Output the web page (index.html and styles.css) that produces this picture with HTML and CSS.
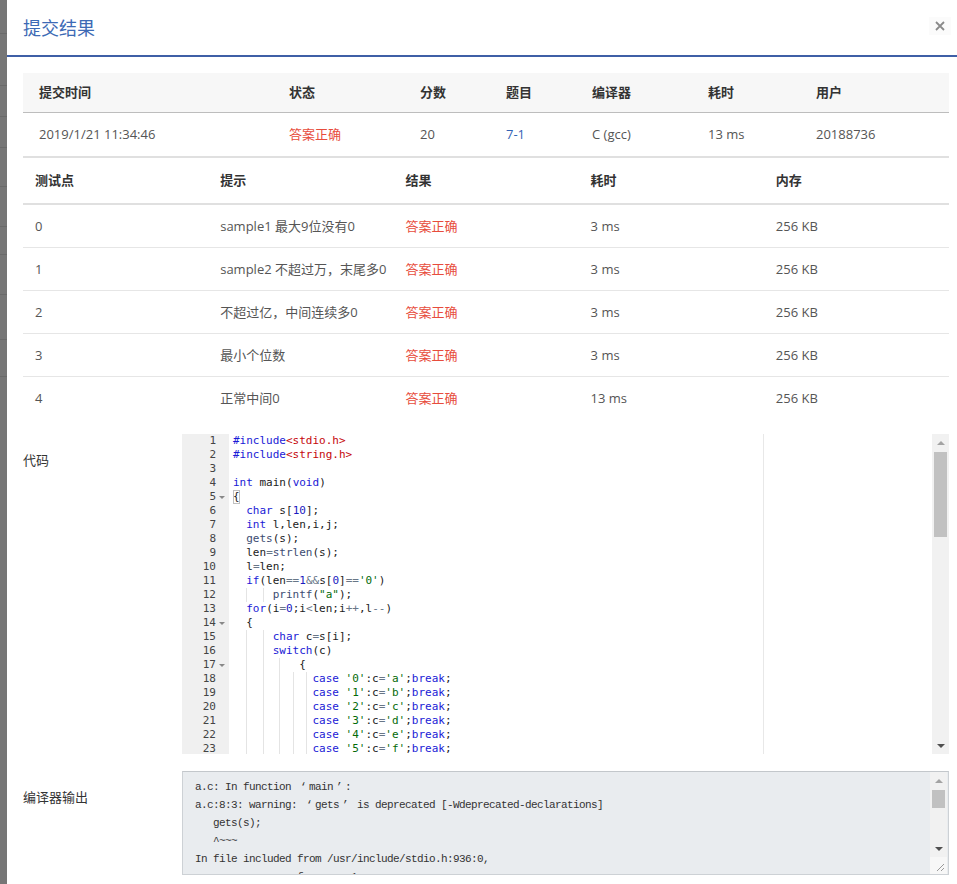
FILE: index.html
```html
<!DOCTYPE html>
<html lang="zh-CN">
<head>
<meta charset="utf-8">
<title>提交结果</title>
<link rel="stylesheet" href="styles.css">
</head>
<body>
<div class="modal">
  <div class="modal-header">
    <h4 class="modal-title">提交结果</h4>
    <button class="close" type="button" aria-label="Close">
      <svg width="10" height="10" viewBox="0 0 10 10"><path d="M1 1L9 9M9 1L1 9" stroke="#8a8a8a" stroke-width="1.8" fill="none"/></svg>
    </button>
  </div>
  <div class="modal-body">
    <div class="sum">
      <div class="sum-head">
        <div>提交时间</div><div>状态</div><div>分数</div><div>题目</div><div>编译器</div><div>耗时</div><div>用户</div>
      </div>
      <div class="sum-row">
        <div>2019/1/21 11:34:46</div><div class="ok">答案正确</div><div>20</div><div class="link">7-1</div><div>C (gcc)</div><div>13 ms</div><div>20188736</div>
      </div>
    </div>

    <div class="tests">
      <div class="t-head">
        <div>测试点</div><div>提示</div><div>结果</div><div>耗时</div><div>内存</div>
      </div>
      <div class="t-row"><div>0</div><div>sample1 最大9位没有0</div><div class="ok">答案正确</div><div>3 ms</div><div>256 KB</div></div>
      <div class="t-row"><div>1</div><div>sample2 不超过万，末尾多0</div><div class="ok">答案正确</div><div>3 ms</div><div>256 KB</div></div>
      <div class="t-row"><div>2</div><div>不超过亿，中间连续多0</div><div class="ok">答案正确</div><div>3 ms</div><div>256 KB</div></div>
      <div class="t-row"><div>3</div><div>最小个位数</div><div class="ok">答案正确</div><div>3 ms</div><div>256 KB</div></div>
      <div class="t-row"><div>4</div><div>正常中间0</div><div class="ok">答案正确</div><div>13 ms</div><div>256 KB</div></div>
    </div>

    <div class="field code-field">
      <div class="label">代码</div>
      <div class="editor">
        <div class="gutter">
          <div class="gl"><span class="num">1</span><span class="fc"></span></div>
          <div class="gl"><span class="num">2</span><span class="fc"></span></div>
          <div class="gl"><span class="num">3</span><span class="fc"></span></div>
          <div class="gl"><span class="num">4</span><span class="fc"></span></div>
          <div class="gl"><span class="num">5</span><span class="fc"><span class="fw"></span></span></div>
          <div class="gl"><span class="num">6</span><span class="fc"></span></div>
          <div class="gl"><span class="num">7</span><span class="fc"></span></div>
          <div class="gl"><span class="num">8</span><span class="fc"></span></div>
          <div class="gl"><span class="num">9</span><span class="fc"></span></div>
          <div class="gl"><span class="num">10</span><span class="fc"></span></div>
          <div class="gl"><span class="num">11</span><span class="fc"></span></div>
          <div class="gl"><span class="num">12</span><span class="fc"></span></div>
          <div class="gl"><span class="num">13</span><span class="fc"></span></div>
          <div class="gl"><span class="num">14</span><span class="fc"><span class="fw"></span></span></div>
          <div class="gl"><span class="num">15</span><span class="fc"></span></div>
          <div class="gl"><span class="num">16</span><span class="fc"></span></div>
          <div class="gl"><span class="num">17</span><span class="fc"><span class="fw"></span></span></div>
          <div class="gl"><span class="num">18</span><span class="fc"></span></div>
          <div class="gl"><span class="num">19</span><span class="fc"></span></div>
          <div class="gl"><span class="num">20</span><span class="fc"></span></div>
          <div class="gl"><span class="num">21</span><span class="fc"></span></div>
          <div class="gl"><span class="num">22</span><span class="fc"></span></div>
          <div class="gl"><span class="num">23</span><span class="fc"></span></div>
          <div class="gl"><span class="num">24</span><span class="fc"></span></div>
        </div>
        <div class="code">
          <div class="print-margin"></div>
          <div class="ln"><span class="k">#include</span><span class="c">&lt;stdio.h&gt;</span></div>
          <div class="ln"><span class="k">#include</span><span class="c">&lt;string.h&gt;</span></div>
          <div class="ln"> </div>
          <div class="ln"><span class="k">int</span> main(<span class="k">void</span>)</div>
          <div class="ln"><span class="br">{</span></div>
          <div class="ln">  <span class="k">char</span> s[<span class="n">10</span>];</div>
          <div class="ln">  <span class="k">int</span> l,len,i,j;</div>
          <div class="ln">  <span class="f">gets</span>(s);</div>
          <div class="ln">  len<span class="o">=</span><span class="f">strlen</span>(s);</div>
          <div class="ln">  l<span class="o">=</span>len;</div>
          <div class="ln">  <span class="k">if</span>(len<span class="o">==</span><span class="n">1</span><span class="o">&amp;&amp;</span>s[<span class="n">0</span>]<span class="o">==</span><span class="s">'0'</span>)</div>
          <div class="ln">  <span class="g w25"></span><span class="g w15"></span><span class="f">printf</span>(<span class="s">"a"</span>);</div>
          <div class="ln">  <span class="k">for</span>(i<span class="o">=</span><span class="n">0</span>;i<span class="o">&lt;</span>len;i<span class="o">++</span>,l<span class="o">--</span>)</div>
          <div class="ln">  {</div>
          <div class="ln">  <span class="g w25"></span><span class="g w15"></span><span class="k">char</span> c<span class="o">=</span>s[i];</div>
          <div class="ln">  <span class="g w25"></span><span class="g w15"></span><span class="k">switch</span>(c)</div>
          <div class="ln">  <span class="g w25"></span><span class="g w25"></span><span class="g w3"></span>{</div>
          <div class="ln">  <span class="g w25"></span><span class="g w25"></span><span class="g w2"></span><span class="g w2"></span><span class="g w1"></span><span class="k">case</span> <span class="s">'0'</span>:c<span class="o">=</span><span class="s">'a'</span>;<span class="k">break</span>;</div>
          <div class="ln">  <span class="g w25"></span><span class="g w25"></span><span class="g w2"></span><span class="g w2"></span><span class="g w1"></span><span class="k">case</span> <span class="s">'1'</span>:c<span class="o">=</span><span class="s">'b'</span>;<span class="k">break</span>;</div>
          <div class="ln">  <span class="g w25"></span><span class="g w25"></span><span class="g w2"></span><span class="g w2"></span><span class="g w1"></span><span class="k">case</span> <span class="s">'2'</span>:c<span class="o">=</span><span class="s">'c'</span>;<span class="k">break</span>;</div>
          <div class="ln">  <span class="g w25"></span><span class="g w25"></span><span class="g w2"></span><span class="g w2"></span><span class="g w1"></span><span class="k">case</span> <span class="s">'3'</span>:c<span class="o">=</span><span class="s">'d'</span>;<span class="k">break</span>;</div>
          <div class="ln">  <span class="g w25"></span><span class="g w25"></span><span class="g w2"></span><span class="g w2"></span><span class="g w1"></span><span class="k">case</span> <span class="s">'4'</span>:c<span class="o">=</span><span class="s">'e'</span>;<span class="k">break</span>;</div>
          <div class="ln">  <span class="g w25"></span><span class="g w25"></span><span class="g w2"></span><span class="g w2"></span><span class="g w1"></span><span class="k">case</span> <span class="s">'5'</span>:c<span class="o">=</span><span class="s">'f'</span>;<span class="k">break</span>;</div>
          <div class="ln">  <span class="g w25"></span><span class="g w25"></span><span class="g w2"></span><span class="g w2"></span><span class="g w1"></span><span class="k">case</span> <span class="s">'6'</span>:c<span class="o">=</span><span class="s">'g'</span>;<span class="k">break</span>;</div>
        </div>
        <div class="vscroll">
          <div class="sb-btn"><span class="arr up dim"></span></div>
          <div class="sb-track">
            <div class="sb-thumb editor-thumb"></div>
          </div>
          <div class="sb-btn"><span class="arr down"></span></div>
        </div>
      </div>
    </div>

    <div class="field out-field">
      <div class="label">编译器输出</div>
      <div class="output">
        <div class="out-text">
          <div class="ol">a.c: In function <span class="q">‘</span>main<span class="q">’</span>:</div>
          <div class="ol">a.c:8:3: warning: <span class="q">‘</span>gets<span class="q">’</span> is deprecated [-Wdeprecated-declarations]</div>
          <div class="ol">   gets(s);</div>
          <div class="ol">   ^~~~</div>
          <div class="ol">In file included from /usr/include/stdio.h:936:0,</div>
          <div class="ol">                 from a.c:1:</div>
        </div>
        <div class="vscroll out-scroll">
          <div class="sb-btn"><span class="arr up dim"></span></div>
          <div class="sb-track">
            <div class="sb-thumb out-thumb"></div>
          </div>
          <div class="sb-btn"><span class="arr down"></span></div>
          <div class="resizer">
            <svg width="17" height="17" viewBox="0 0 17 17"><path d="M14 7L7 14M14 11L11 14" stroke="#9a9a9a" stroke-width="1" fill="none"/></svg>
          </div>
        </div>
      </div>
    </div>
  </div>
</div>
</body>
</html>
```

FILE: styles.css
```css
* { box-sizing: border-box; }

html, body {
  margin: 0;
  height: 100%;
  overflow: hidden;
}

body {
  background-color: #767676;
  background-image: linear-gradient(to bottom,
    transparent 33px, #6a6a6a 33px, #6a6a6a 34px, transparent 34px,
    transparent 85px, #6a6a6a 85px, #6a6a6a 86px, transparent 86px,
    transparent 116px, #6a6a6a 116px, #6a6a6a 117px, transparent 117px,
    transparent 147px, #6a6a6a 147px, #6a6a6a 148px, transparent 148px,
    transparent 186px, #6a6a6a 186px, #6a6a6a 187px, transparent 187px,
    transparent 226px, #6a6a6a 226px, #6a6a6a 227px, transparent 227px,
    transparent 254px, #6a6a6a 254px, #6a6a6a 255px, transparent 255px,
    transparent 294px, #6a6a6a 294px, #6a6a6a 295px, transparent 295px,
    transparent 339px, #6a6a6a 339px, #6a6a6a 340px, transparent 340px,
    transparent 376px, #6a6a6a 376px, #6a6a6a 377px, transparent 377px);
  font-family: "Open Sans", "Noto Sans CJK SC", sans-serif;
  font-size: 13px;
  color: #555;
}

.modal {
  margin-left: 7px;
  height: 100%;
  background: #fff;
}

.modal-header {
  display: flex;
  align-items: center;
  justify-content: space-between;
  height: 57px;
  padding: 0 6px 0 16px;
  border-bottom: 2px solid #3f5fa6;
}

.modal-title {
  margin: 0;
  font-size: 18px;
  font-weight: normal;
  line-height: 26px;
  color: #3d6ab5;
}

.close {
  display: flex;
  align-items: center;
  justify-content: center;
  width: 22px;
  height: 18px;
  margin-top: -4px;
  padding: 0;
  border: 0;
  background: #fbfbfb;
}

.modal-body {
  padding: 16px 8px 0 16px;
}

/* summary table */
.sum { width: 926px; }

.sum-head, .sum-row {
  display: grid;
  grid-template-columns: 250px 131px 86px 86px 116px 108px 149px;
}

.sum-head {
  background: #f7f7f7;
  border-bottom: 1px solid #bdbdbd;
}

.sum-head > div {
  padding: 10px 16px;
  line-height: 19px;
  font-weight: bold;
  color: #333;
  white-space: nowrap;
}

.sum-row {
  border-bottom: 2px solid #e0e0e0;
}

.sum-row > div {
  padding: 12px 16px;
  line-height: 19px;
  white-space: nowrap;
}

.ok { color: #e74c3c; }
.link { color: #3363b5; }

/* tests table */
.tests { width: 926px; }

.t-head, .t-row {
  display: grid;
  grid-template-columns: repeat(5, minmax(0, 1fr));
}

.t-head {
  border-bottom: 2px solid #e0e0e0;
}

.t-head > div {
  padding: 13px 12px;
  line-height: 19px;
  font-weight: bold;
  color: #333;
}

.t-row > div {
  padding: 12px 12px 11px;
  line-height: 19px;
  white-space: nowrap;
}

.t-row + .t-row {
  border-top: 1px solid #e6e6e6;
}

/* fields */
.field {
  display: flex;
  width: 926px;
}

.code-field { margin-top: 15px; }
.out-field { margin-top: 17px; }

.label {
  width: 159px;
  flex: none;
  padding-top: 17px;
  line-height: 19px;
  color: #333;
}

/* editor */
.editor {
  display: flex;
  width: 767px;
  height: 320px;
  overflow: hidden;
  background: #fff;
  font-family: "DejaVu Sans Mono", "Liberation Mono", monospace;
  font-size: 11px;
  line-height: 14px;
  color: #222;
}

.gutter {
  width: 47px;
  flex: none;
  background: #f0f0f0;
  color: #444;
}

.gl {
  display: flex;
  height: 14px;
}

.num {
  flex: 1;
  text-align: right;
}

.fc {
  width: 13px;
  display: flex;
  align-items: center;
  justify-content: center;
}

.fw {
  width: 0;
  height: 0;
  border-left: 3px solid transparent;
  border-right: 3px solid transparent;
  border-top: 3px solid #888;
  margin-left: -2px;
}

.code {
  position: relative;
  flex: 1;
  padding-left: 4px;
  overflow: hidden;
}

.print-margin {
  position: absolute;
  top: 0;
  bottom: 0;
  left: calc(4px + 80ch);
  width: 1px;
  background: #e8e8e8;
}

.ln {
  height: 14px;
  white-space: pre;
}

.k { color: #1a1ad6; }
.c { color: #c5060b; }
.s { color: #036a07; }
.n { color: #1a1ac0; }
.o { color: #687687; }
.f { color: #3c4c72; }

.br {
  display: inline-block;
  height: 14px;
  outline: 1px solid #c0c0c0;
  outline-offset: -1px;
}

.g {
  display: inline-block;
  height: 14px;
  vertical-align: top;
  border-left: 1px solid #e4e4e4;
}

.w1 { width: 1ch; }
.w15 { width: 1.5ch; }
.w2 { width: 2ch; }
.w25 { width: 2.5ch; }
.w3 { width: 3ch; }

/* scrollbars */
.vscroll {
  display: flex;
  flex-direction: column;
  width: 17px;
  flex: none;
  background: #f1f1f1;
}

.sb-btn {
  height: 17px;
  flex: none;
  display: flex;
  align-items: center;
  justify-content: center;
}

.sb-track {
  flex: 1;
  padding: 1px 2px;
}

.sb-thumb {
  background: #c1c1c1;
}

.editor-thumb { height: 85px; }
.out-thumb { height: 18px; }

.arr {
  width: 0;
  height: 0;
  border-left: 4px solid transparent;
  border-right: 4px solid transparent;
}

.arr.up { border-bottom: 4px solid #505050; }
.arr.down { border-top: 4px solid #505050; }
.arr.up.dim { border-bottom-color: #a3a3a3; }

/* compiler output */
.output {
  display: flex;
  width: 767px;
  height: 104px;
  border: 1px solid #cdd1d5;
  border-top-color: #c3c7cb;
  background: #e9ecef;
  overflow: hidden;
}

.out-text {
  flex: 1;
  padding: 6px 12px;
  overflow: hidden;
  font-family: "Liberation Mono", "DejaVu Sans Mono", monospace;
  font-size: 11px;
  letter-spacing: -0.6px;
  line-height: 18px;
  color: #333;
}

.ol {
  height: 18px;
  white-space: pre;
}

.q {
  display: inline-block;
  width: 12px;
  text-align: center;
}

.out-scroll {
  margin-right: 1px;
}

.resizer {
  height: 17px;
  flex: none;
  background: #f7f7f7;
}

.resizer svg { display: block; }
```
